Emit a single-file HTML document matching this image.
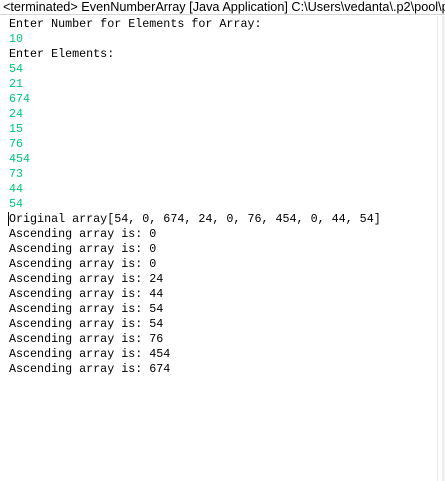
<!DOCTYPE html>
<html><head><style>
html,body{margin:0;padding:0;background:#fff;width:445px;height:481px;overflow:hidden;position:relative}
.hdr{position:absolute;left:0;top:0;width:445px;height:15px;border-bottom:1px solid #d6d6d6;font-family:"Liberation Sans",sans-serif;font-size:12.7px;line-height:14px;white-space:nowrap;color:#000;padding-left:3px;box-sizing:border-box;overflow:hidden}
.vl{position:absolute;left:437px;top:16px;width:1px;height:465px;background:#e8e8e8}
.rs{position:absolute;left:442px;top:16px;width:3px;height:465px;background:#f0f0f0}
pre{position:absolute;left:9px;top:17px;margin:0;font-family:"Liberation Mono",monospace;font-size:11.7px;line-height:15px;color:#000}
.g{color:#00c87d}
.cur{border-left:1px solid #000;margin-left:-1px}
</style></head><body>
<div class="hdr">&lt;terminated&gt; EvenNumberArray [Java Application] C:\Users\vedanta\.p2\pool\plugins</div>
<div class="vl"></div><div class="rs"></div>
<pre>Enter Number for Elements for Array:
<span class="g">10</span>
Enter Elements:
<span class="g">54
21
674
24
15
76
454
73
44
54</span>
<span class="cur"></span>Original array[54, 0, 674, 24, 0, 76, 454, 0, 44, 54]
Ascending array is: 0
Ascending array is: 0
Ascending array is: 0
Ascending array is: 24
Ascending array is: 44
Ascending array is: 54
Ascending array is: 54
Ascending array is: 76
Ascending array is: 454
Ascending array is: 674</pre>
</body></html>
